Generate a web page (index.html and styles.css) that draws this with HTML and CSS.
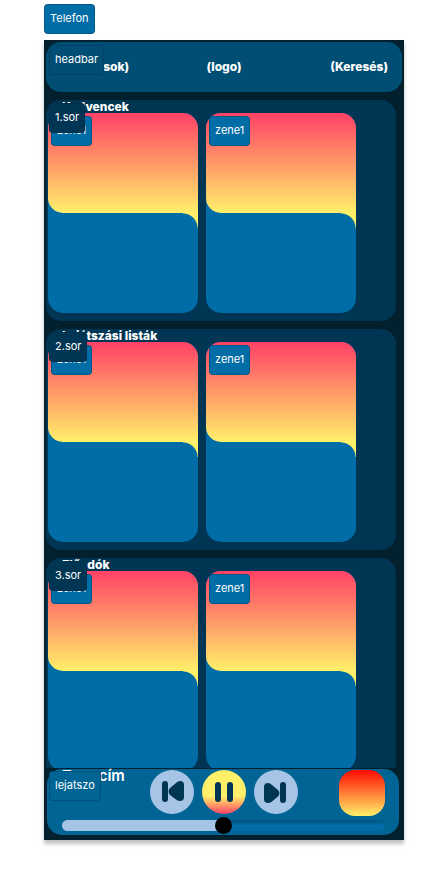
FILE: index.html
```html
<!DOCTYPE html>
<html lang="hu">
<head>
<meta charset="utf-8">
<meta name="viewport" content="width=device-width, initial-scale=1">
<title>Telefon</title>
<link rel="stylesheet" href="styles.css">
</head>
<body>
<div class="stage">
  <span class="tag tag-device">Telefon</span>
  <div class="phone">
    <header class="headbar">
      <span class="tag tag-head">headbar</span>
      <a href="#">(Alkotások)</a>
      <a href="#">(logo)</a>
      <a href="#">(Keresés)</a>
    </header>
    <main class="rows">
      <section class="row">
        <span class="tag tag-row">1.sor</span>
        <h2>Kedvencek</h2>
        <div class="cards">
          <article class="card"><div class="cover"></div><span class="tag tag-card">zene1</span></article>
          <article class="card"><div class="cover"></div><span class="tag tag-card">zene1</span></article>
        </div>
      </section>
      <section class="row">
        <span class="tag tag-row">2.sor</span>
        <h2>Lejátszási listák</h2>
        <div class="cards">
          <article class="card"><div class="cover"></div><span class="tag tag-card">zene1</span></article>
          <article class="card"><div class="cover"></div><span class="tag tag-card">zene1</span></article>
        </div>
      </section>
      <section class="row">
        <span class="tag tag-row">3.sor</span>
        <h2>Előadók</h2>
        <div class="cards">
          <article class="card"><div class="cover"></div><span class="tag tag-card">zene1</span></article>
          <article class="card"><div class="cover"></div><span class="tag tag-card">zene1</span></article>
        </div>
      </section>
    </main>
    <footer class="player">
      <span class="tag tag-player">lejatszo</span>
      <div class="now">
        <p class="song">Zenecím</p>
        <div class="controls">
          <button type="button" aria-label="Előző">
            <svg viewBox="0 0 44 44"><rect x="12" y="11" width="6" height="21" rx="3"/><path d="M20 18L26 13Q28 11 30 11Q34 11 34 15V27Q34 31 30 31Q28 31 26 29.500L20 25Q17 21.500 20 18Z"/></svg>
          </button>
          <button type="button" class="pause" aria-label="Szünet">
            <svg viewBox="0 0 44 44"><rect x="13" y="12" width="6" height="20" rx="3"/><rect x="25" y="12" width="6" height="20" rx="3"/></svg>
          </button>
          <button type="button" aria-label="Következő">
            <svg viewBox="0 0 44 44"><path d="M24 20L18 15Q16 13 14 13Q10 13 10 17V29Q10 33 14 33Q16 33 18 31.500L24 26.500Q27 23 24 20Z"/><rect x="26" y="12" width="6" height="21" rx="3"/></svg>
          </button>
        </div>
        <div class="art"></div>
      </div>
      <input class="seek" type="range" min="0" max="100" value="50" aria-label="Lejátszás helye">
    </footer>
  </div>
</div>
</body>
</html>
```
FILE: styles.css
```css
* {
  box-sizing: border-box;
}

body {
  margin: 0;
  background: #fff;
  color: #fff;
  font-family: Inter, "Liberation Sans", sans-serif;
  font-size: 12px;
}

.stage {
  position: relative;
  height: 100vh;
  min-height: 480px;
  padding: 40px 44px 48px;
}

.phone {
  display: flex;
  flex-direction: column;
  height: 100%;
  background: #03202f;
  box-shadow: 0 4px 4px rgba(0, 0, 0, 0.25);
}

.tag {
  position: absolute;
  z-index: 1;
  height: 30px;
  padding: 0 5px;
  border: 1px solid rgba(0, 40, 70, 0.3);
  border-radius: 4px;
  background: #006da6;
  font-size: 11px;
  font-weight: 400;
  line-height: 26px;
  white-space: nowrap;
}

.tag-device {
  top: 4px;
  left: 44px;
}

.tag-head {
  top: 3px;
  left: 3px;
  background: #004e74;
}

.tag-row {
  z-index: 2;
  top: 3px;
  left: 3px;
  background: #003554;
}

.tag-card {
  top: 3px;
  left: 3px;
}

.tag-player {
  top: 2px;
  left: 2px;
  background: #006494;
}

.headbar {
  position: relative;
  display: grid;
  flex: none;
  grid-template-columns: 1fr auto 1fr;
  align-items: center;
  height: 50px;
  margin: 2px 2px 8px;
  padding: 0 14px 2px;
  border-radius: 15px;
  background: #004e74;
}

.headbar a {
  color: #fff;
  font-weight: 800;
  text-decoration: none;
}

.headbar a:last-child {
  text-align: right;
}

.rows {
  display: flex;
  flex: 1;
  flex-direction: column;
  gap: 8px;
  min-height: 0;
  margin: 0 8px 1px 2px;
  overflow: hidden;
}

.row {
  position: relative;
  flex: none;
  padding: 0 2px 8px;
  border-radius: 15px;
  background: #003554;
}

.row h2 {
  margin: 0;
  padding-left: 14px;
  font-size: 12px;
  font-weight: 800;
  line-height: 13px;
}

.cards {
  display: flex;
  gap: 8px;
}

.card {
  position: relative;
  flex: none;
  width: 150px;
  height: 200px;
  border-radius: 15px;
  background: #006da6;
}

.cover {
  height: 50%;
  border-radius: 15px 15px 0 15px;
  background: linear-gradient(#ff4166, #fff06a);
}

.cover::after {
  content: "";
  position: absolute;
  top: 50%;
  right: 0;
  width: 15px;
  height: 15px;
  background: radial-gradient(circle at 0 100%, #006da6 14px, #fff06a 15px);
}

.player {
  position: relative;
  flex: none;
  margin: 0 5px 5px 3px;
  padding: 1px 14px 4px 15px;
  border-radius: 15px;
  background: #006494;
}

.now {
  display: grid;
  grid-template-columns: 1fr auto 1fr;
  align-items: start;
}

.song {
  margin: 0;
  font-size: 15px;
  font-weight: 600;
  line-height: 12px;
}

.controls {
  display: flex;
  gap: 8px;
}

.controls button {
  width: 44px;
  height: 44px;
  padding: 0;
  border: 0;
  border-radius: 50%;
  background: #a6c5e6;
}

.controls .pause {
  background: linear-gradient(#fff06a 60%, #ff4166);
}

.controls svg {
  display: block;
  fill: #003554;
}

.art {
  justify-self: end;
  width: 46px;
  height: 46px;
  border-radius: 16px;
  background: linear-gradient(#ff0a00, #fff06a);
}

.seek {
  display: block;
  width: 100%;
  height: 11px;
  margin: 4px 0 0;
  border-radius: 6px;
  background: #006da6;
  appearance: none;
}

.seek::-webkit-slider-runnable-track {
  height: 11px;
  border-radius: 6px;
  background: linear-gradient(90deg, #a6c5e6 50%, transparent 50%), linear-gradient(rgba(0, 53, 84, 0.5), transparent 5px);
}

.seek::-webkit-slider-thumb {
  width: 17px;
  height: 17px;
  margin-top: -3px;
  border-radius: 50%;
  background: #000;
  appearance: none;
}
```
